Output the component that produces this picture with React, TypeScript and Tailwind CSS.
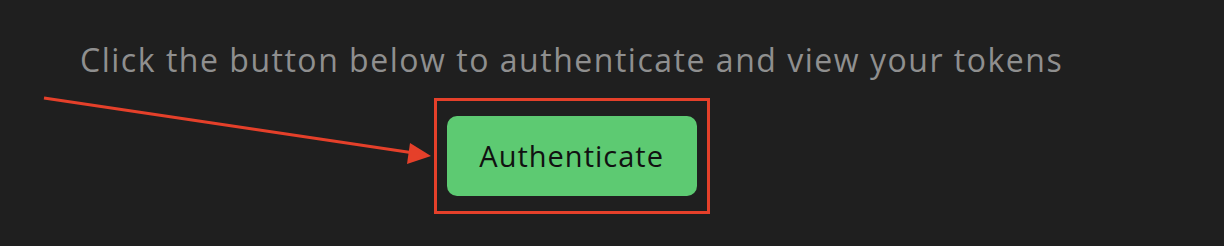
export default function App() {
  return (
    <div className="relative w-full h-[246px] bg-[#1f1f1f] overflow-hidden" style={{ fontFamily: '"Open Sans", "Noto Sans", sans-serif' }}>
      <div className="flex flex-col items-center w-fit pl-[80px] pt-[40px]">
        <p className="text-[32px] leading-[40px] text-[#8f8f8f] font-medium tracking-[1.52px]">
          Click the button below to authenticate and view your tokens
        </p>
        <div className="mt-[18px] border-[3px] border-[#e5402a] px-[10px] py-[15px]">
          <button className="w-[250px] h-[80px] rounded-[10px] bg-[#5dca72] text-[29px] text-[#111] font-medium tracking-[1px]">
            Authenticate
          </button>
        </div>
      </div>
      <svg className="absolute left-0 top-0" width="1224" height="246" viewBox="0 0 1224 246">
        <line x1="44" y1="98" x2="414" y2="153" stroke="#e5402a" strokeWidth="3" />
        <polygon points="431,156 410,143 407,164" fill="#e5402a" />
      </svg>
    </div>
  );
}
